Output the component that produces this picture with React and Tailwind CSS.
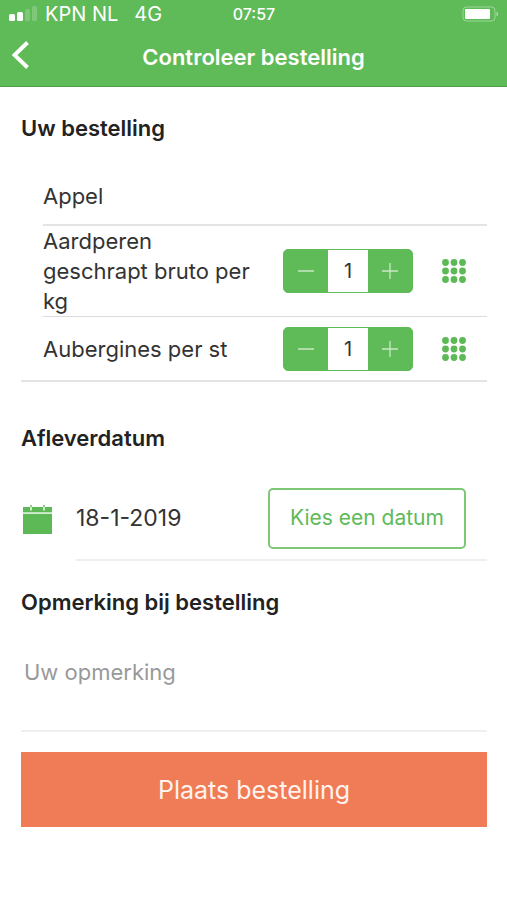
import { useState } from "react";

function SignalIcon() {
  return (
    <svg width="28" height="16" viewBox="0 0 28 16" fill="#fff" aria-hidden="true">
      <rect x="0" y="8" width="6" height="7" rx="1.5" />
      <rect x="8" y="6" width="6" height="9" rx="1.5" />
      <rect x="16" y="3" width="5" height="12" rx="1.5" opacity="0.2" />
      <rect x="23" y="0" width="5" height="15" rx="1.5" opacity="0.2" />
    </svg>
  );
}

function BatteryIcon() {
  return (
    <svg width="37" height="16" viewBox="0 0 37 16" aria-hidden="true">
      <rect x="1" y="1" width="32" height="14" rx="3.5" fill="none" stroke="#fff" strokeOpacity="0.4" />
      <rect x="3" y="3" width="25" height="10" rx="1" fill="#fff" />
      <path d="M34.5 5.5c2 .8 2 4.2 0 5z" fill="#fff" opacity="0.5" />
    </svg>
  );
}

function CalendarIcon() {
  return (
    <svg width="29" height="29" viewBox="0 0 29 29" aria-hidden="true">
      <path d="M0 2h29v5.500H0zM0 9h29v20H0z" fill="#5cb955" />
      <path d="M0 7.500h29V9H0z" fill="#d3edd0" />
      <path d="M8 1.500v4M21 1.500v4" stroke="#d3edd0" strokeWidth="2" />
      <path d="M7 0h2v2H7zM20 0h2v2h-2z" fill="#8ccf87" />
    </svg>
  );
}

function GridIcon() {
  const places = [3.5, 12, 20.5];
  return (
    <svg width="24" height="24" viewBox="0 0 24 24" fill="#5cb955" aria-hidden="true">
      {places.map((y) => places.map((x) => <circle key={x + "-" + y} cx={x} cy={y} r="3.400" />))}
    </svg>
  );
}

function Stepper({ name }) {
  const [amount, setAmount] = useState(1);
  return (
    <div className="flex h-11 w-[130px] shrink-0 overflow-hidden rounded-[5px] border border-[#5fba58] bg-[#5fba58]">
      <button
        type="button"
        aria-label={"Minder " + name}
        onClick={() => setAmount(Math.max(0, amount - 1))}
        className="flex flex-1 items-center justify-center"
      >
        <svg width="16" height="16" viewBox="0 0 16 16" stroke="#c9e8c5" strokeWidth="1.300" aria-hidden="true">
          <path d="M0 8h16" />
        </svg>
      </button>
      <input
        type="text"
        inputMode="numeric"
        aria-label={"Aantal " + name}
        value={amount}
        onChange={(e) => setAmount(Number(e.target.value) || 0)}
        className="w-10 bg-white text-center text-xl text-[#333] outline-none"
      />
      <button
        type="button"
        aria-label={"Meer " + name}
        onClick={() => setAmount(amount + 1)}
        className="flex flex-1 items-center justify-center"
      >
        <svg width="16" height="16" viewBox="0 0 16 16" stroke="#c9e8c5" strokeWidth="1.300" aria-hidden="true">
          <path d="M0 8h16M8 0v16" />
        </svg>
      </button>
    </div>
  );
}

function OrderLine({ name, last }) {
  return (
    <li className={last ? "flex h-[63px] items-center pl-[22px]" : "ml-[22px] flex items-center border-b border-[#dcdcdc]"}>
      <span className="flex-1 pr-6">{name}</span>
      <Stepper name={name} />
      <button type="button" aria-label={"Opties voor " + name} className="mr-[21px] ml-[29px]">
        <GridIcon />
      </button>
    </li>
  );
}

export default function App() {
  return (
    <div className="min-h-screen bg-white font-['Inter','Liberation_Sans',sans-serif] text-[22px] leading-[30px] text-[#333]">
      <header className="border-b border-[#519e49] bg-[#5fba58] text-white">
        <div className="grid h-7 grid-cols-3 items-center pr-2 pl-[9px]">
          <div className="flex items-center gap-2 text-xl leading-7">
            <SignalIcon />
            <span className="whitespace-nowrap">KPN NL</span>
            <span className="ml-2">4G</span>
          </div>
          <div className="text-center text-base font-medium">07:57</div>
          <div className="flex justify-end">
            <BatteryIcon />
          </div>
        </div>
        <div className="grid h-[58px] grid-cols-[40px_1fr_40px] items-center">
          <button type="button" aria-label="Terug" className="pb-1 pl-3">
            <svg width="17" height="28" viewBox="0 0 17 28" fill="none" stroke="#fff" strokeWidth="4" aria-hidden="true">
              <path d="M15.500 1.500 2.500 14l13 12.500" />
            </svg>
          </button>
          <h1 className="text-center font-semibold">Controleer bestelling</h1>
        </div>
      </header>

      <main className="pr-5 pl-[21px]">
        <section className="pt-[26px]">
          <h2 className="font-semibold text-[#222]">Uw bestelling</h2>
          <ul className="mt-6 border-b-2 border-[#e4e4e4]">
            <li className="ml-[22px] flex h-[59px] items-center border-b-2 border-[#e4e4e4]">Appel</li>
            <OrderLine name="Aardperen geschrapt bruto per kg" />
            <OrderLine name="Aubergines per st" last />
          </ul>
        </section>

        <section className="pt-[41px]">
          <h2 className="font-semibold text-[#222]">Afleverdatum</h2>
          <div className="mt-6 flex">
            <div className="flex w-[55px] items-center pl-[2px]">
              <CalendarIcon />
            </div>
            <div className="flex h-[84px] flex-1 items-center justify-between border-b-2 border-[#efefef] pr-[21px]">
              <span className="text-[23px]">18-1-2019</span>
              <button
                type="button"
                className="h-[61px] w-[198px] rounded-[5px] border-2 border-[#7dc777] text-[21px] text-[#5fba58]"
              >
                Kies een datum
              </button>
            </div>
          </div>
        </section>

        <section className="pt-[26px]">
          <h2 className="font-semibold text-[#222]">
            <label htmlFor="opmerking">Opmerking bij bestelling</label>
          </h2>
          <input
            id="opmerking"
            type="text"
            placeholder="Uw opmerking"
            className="block h-[115px] w-full border-b-2 border-[#efefef] px-[3px] pb-1 outline-none placeholder:text-[#999]"
          />
          <button type="button" className="mt-5 h-[75px] w-full bg-[#f07b57] text-[25px] text-[#fff3ee]">
            Plaats bestelling
          </button>
        </section>
      </main>
    </div>
  );
}
